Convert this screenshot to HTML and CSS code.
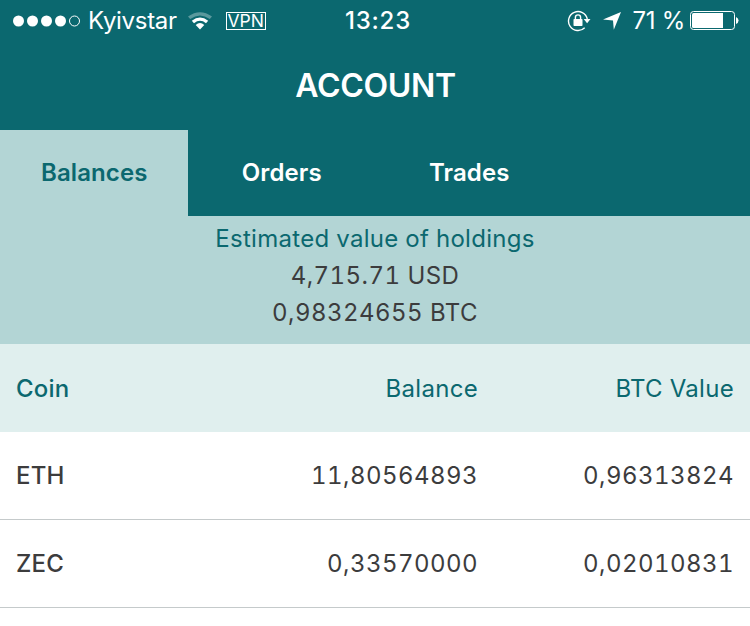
FILE: index.html
```html
<!DOCTYPE html>
<html lang="en">
<head>
<meta charset="utf-8">
<title>Account</title>
<link rel="stylesheet" href="styles.css">
</head>
<body>
<header class="top">
  <div class="status">
    <div class="status-left">
      <svg class="signal" width="68" height="12" viewBox="0 0 68 12"><g fill="#fff"><circle cx="5.500" cy="6" r="5.500"/><circle cx="19.500" cy="6" r="5.500"/><circle cx="33.500" cy="6" r="5.500"/><circle cx="47.500" cy="6" r="5.500"/></g><circle cx="61.500" cy="6" r="5" fill="none" stroke="#fff"/></svg>
      <span class="carrier">Kyivstar</span>
      <svg class="wifi" width="24" height="18" viewBox="0 0 24 18"><path d="M0 4.500Q12-4 24 4.500L21.800 7Q12 0 2.200 7Z" fill="#5a999d"/><path d="M3.800 8.700Q12 2.300 20.200 8.700L18 11.200Q12 6.500 6 11.200Z" fill="#fff"/><path d="M7.700 13Q12 9 16.300 13L12 17.500Z" fill="#fff"/></svg>
      <span class="vpn">VPN</span>
    </div>
    <span class="clock">13:23</span>
    <div class="status-right">
      <svg class="lock" width="24" height="22" viewBox="0 0 24 22"><path d="M20.300 9A9.500 9.500 0 1 0 17.700 17.800" fill="none" stroke="#fff" stroke-width="1.400"/><path d="M16.700 9H23.500L20.100 13.200Z" fill="#fff"/><rect x="6.500" y="9" width="9" height="7" rx=".8" fill="#fff"/><path d="M8.400 9.500V7.500a2.600 2.600 0 0 1 5.200 0V9.500" fill="none" stroke="#fff" stroke-width="1.400"/></svg>
      <svg class="arrow" width="18" height="18" viewBox="0 0 18 18"><path d="M18 0L10.800 17.800L10 8.500L0 7.500Z" fill="#fff"/></svg>
      <span class="percent">71 %</span>
      <svg class="battery" width="50" height="20" viewBox="0 0 50 20"><rect x="1.500" y=".5" width="44" height="18" rx="3" fill="none" stroke="#fff"/><path d="M4.500 2H34V17H4.500Q3 17 3 15.500V3.500Q3 2 4.500 2Z" fill="#fff"/><path d="M47 6Q49.500 7 49.500 9.500T47 13Z" fill="#fff"/></svg>
    </div>
  </div>
  <h1 class="title">ACCOUNT</h1>
  <nav class="tabs">
    <a class="tab tab-active">Balances</a>
    <a class="tab">Orders</a>
    <a class="tab">Trades</a>
  </nav>
</header>
<section class="summary">
  <div class="summary-label">Estimated value of holdings</div>
  <div class="usd">4,715.71 USD</div>
  <div class="btc">0,98324655 BTC</div>
</section>
<main class="table">
  <div class="row head"><span class="coin">Coin</span><span class="balance">Balance</span><span class="value">BTC Value</span></div>
  <div class="row"><span class="coin">ETH</span><span class="balance">11,80564893</span><span class="value">0,96313824</span></div>
  <div class="row"><span class="coin">ZEC</span><span class="balance">0,33570000</span><span class="value">0,02010831</span></div>
</main>
</body>
</html>
```
FILE: styles.css
```css
* { box-sizing: border-box; }
body {
  margin: 0;
  background: #fff;
  color: #3c3c3d;
  font: 24px/36px Inter, sans-serif;
}
svg { display: block; flex: none; }
.top { height: 216px; background: #0b686f; color: #fff; }
.status {
  display: grid;
  grid-template-columns: 1fr auto 1fr;
  height: 40px;
  padding: 1px 11px 0 13px;
  align-items: center;
  line-height: 40px;
  white-space: nowrap;
}
.status-left, .status-right { display: flex; align-items: center; }
.status-right { justify-content: flex-end; }
.carrier { margin-left: 7px; letter-spacing: -0.3px; }
.wifi { margin-left: 11px; }
.vpn {
  width: 40px;
  height: 18px;
  margin-left: 14px;
  border: 1px solid #fff;
  font-size: 17.5px;
  line-height: 16px;
  text-align: center;
}
.clock { margin-left: 4px; font-weight: 500; letter-spacing: 0.8px; }
.arrow { margin-left: 12px; }
.percent { margin-left: 12px; letter-spacing: -0.3px; }
.battery { margin-left: 4px; }
.title {
  height: 90px;
  margin: 0;
  padding-left: 1px;
  font-size: 32px;
  font-weight: 600;
  letter-spacing: -0.3px;
  line-height: 91px;
  text-align: center;
}
.tabs { display: flex; height: 86px; }
.tab {
  width: 187.5px;
  padding-left: 1px;
  font-weight: 600;
  letter-spacing: 0.1px;
  line-height: 86px;
  text-align: center;
}
.tab-active { background: #b3d5d5; color: #0b686f; }
.summary {
  height: 128px;
  padding-top: 4px;
  background: #b3d5d5;
  line-height: 37px;
  text-align: center;
  font-variant-numeric: tabular-nums;
}
.summary-label { color: #0b686f; letter-spacing: 0.3px; }
.usd, .btc { letter-spacing: 0.45px; }
.row {
  display: grid;
  grid-template-columns: 206px 256px 1fr;
  height: 88px;
  padding: 0 16px;
  border-bottom: 1px solid #c5cacb;
  line-height: 88px;
  font-variant-numeric: tabular-nums;
}
.coin { font-weight: 500; letter-spacing: 0.2px; }
.balance, .value { text-align: right; letter-spacing: 0.45px; }
.head {
  border: 0;
  background: #e0efee;
  color: #0b686f;
  line-height: 90px;
}
.head .balance, .head .value { letter-spacing: 0.3px; }
```
